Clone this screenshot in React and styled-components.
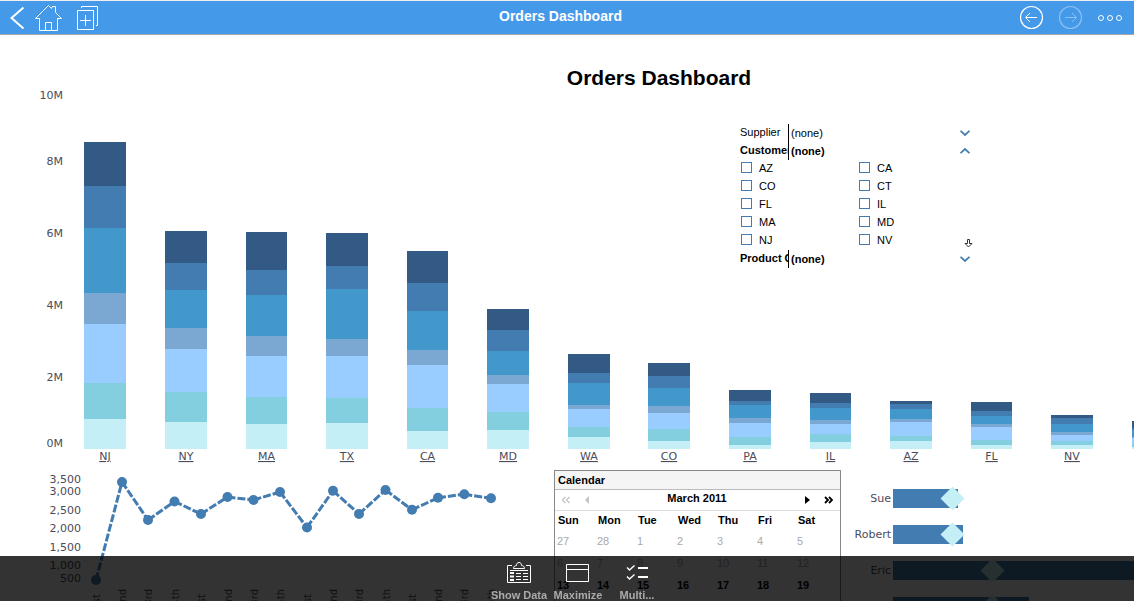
import * as React from "react";
import styled, { createGlobalStyle } from "styled-components";

const SHADES = [
  "#335985",
  "#437cb0",
  "#4298ca",
  "#7ba7d3",
  "#99ccff",
  "#83cfe0",
  "#c4eff6",
];

// segment heights, listed from the top of the stack down
const STATES = [
  { name: "NJ", parts: [44, 42, 65, 31, 59, 36, 30] },
  { name: "NY", parts: [32, 27, 38, 21, 43, 30, 27] },
  { name: "MA", parts: [38, 25, 41, 20, 41, 27, 25] },
  { name: "TX", parts: [33, 23, 50, 17, 42, 25, 26] },
  { name: "CA", parts: [32, 28, 39, 15, 43, 23, 18] },
  { name: "MD", parts: [21, 21, 24, 9, 28, 18, 19] },
  { name: "WA", parts: [19, 10, 22, 4, 18, 10, 12] },
  { name: "CO", parts: [13, 12, 18, 7, 16, 12, 8] },
  { name: "PA", parts: [11, 4, 13, 5, 14, 8, 4] },
  { name: "IL", parts: [10, 5, 12, 4, 10, 8, 7] },
  { name: "AZ", parts: [3, 5, 10, 3, 14, 5, 8] },
  { name: "FL", parts: [9, 5, 8, 3, 13, 5, 4] },
  { name: "NV", parts: [3, 6, 8, 3, 6, 4, 4] },
  { name: "CT", parts: [7, 2, 7, 1, 6, 3, 2] },
];

const STATE_TICKS = [
  ["10M", 64],
  ["8M", 130],
  ["6M", 202],
  ["4M", 274],
  ["2M", 346],
  ["0M", 412],
];

const QUARTER_TICKS = [
  ["3,500", 13],
  ["3,000", 25],
  ["2,500", 44],
  ["2,000", 62],
  ["1,500", 81],
  ["1,000", 99],
  ["500", 112],
];

const QUARTERS = [
  [96, 110],
  [122, 12],
  [148, 50],
  [174.5, 31.5],
  [201, 44],
  [227.5, 27],
  [253.5, 30],
  [280, 22],
  [307, 57.5],
  [333, 20.8],
  [359, 44],
  [385.5, 20],
  [412, 39.8],
  [438, 27.8],
  [464.3, 24.2],
  [491, 28.3],
];

const QUARTER_NAMES = ["1st", "2nd", "3rd", "4th"];

const PEOPLE = [
  { name: "Sue", width: 65, target: 59.5 },
  { name: "Robert", width: 70, target: 59.5 },
  { name: "Eric", width: 300, target: 99.5 },
  { name: "Annie", width: 136, target: 99.5 },
];

const CUSTOMER_STATES = [
  "AZ",
  "CA",
  "CO",
  "CT",
  "FL",
  "IL",
  "MA",
  "MD",
  "NJ",
  "NV",
];

const DAYS = ["Sun", "Mon", "Tue", "Wed", "Thu", "Fri", "Sat"];

const WEEKS = [
  { dim: true, dates: [27, 28, 1, 2, 3, 4, 5] },
  { dim: true, dates: [6, 7, 8, 9, 10, 11, 12] },
  { dim: false, dates: [13, 14, 15, 16, 17, 18, 19] },
  { dim: false, dates: [20, 21, 22, 23, 24, 25, 26] },
];

const StateChart = () => {
  const base = 414;
  return (
    <StateSvg width="1318" height="435" role="img" aria-label="Orders by state">
      {STATE_TICKS.map(([label, y]) => (
        <AxisText key={label} x="63" y={y} textAnchor="end">
          {label}
        </AxisText>
      ))}
      {STATES.map(({ name, parts }, i) => {
        const left = Math.round(84.4 + 80.58 * i);
        const right = Math.round(84.4 + 80.58 * i + 41.7);
        let y = base - parts.reduce((sum, part) => sum + part, 0);
        return (
          <g key={name}>
            {parts.map((part, n) => {
              const top = y;
              y += part;
              return (
                <rect
                  key={n}
                  x={left}
                  y={top}
                  width={right - left}
                  height={part}
                  fill={SHADES[n]}
                />
              );
            })}
            <a href={`#${name}`}>
              <AxisText
                $link
                x={(left + right) / 2}
                y={base + 11}
                textAnchor="middle"
              >
                {name}
              </AxisText>
            </a>
          </g>
        );
      })}
    </StateSvg>
  );
};

const QuarterChart = () => (
  <ChartSvg width="554" height="150" role="img" aria-label="Orders by quarter">
    {QUARTER_TICKS.map(([label, y]) => (
      <AxisText key={label} x="81" y={y} textAnchor="end">
        {label}
      </AxisText>
    ))}
    {QUARTERS.slice(1).map(([x, y], i) => (
      <line
        key={x}
        x1={QUARTERS[i][0]}
        y1={QUARTERS[i][1]}
        x2={x}
        y2={y}
        stroke="#437cb0"
        strokeWidth="3"
        strokeDasharray="8 2"
      />
    ))}
    {QUARTERS.map(([x, y], i) => (
      <g key={x}>
        <circle cx={x} cy={y} r="5" fill="#437cb0" />
        <AxisText
          $small
          textAnchor="end"
          transform={`translate(${Math.round(x) + 4} ${
            i % 4 === 0 ? 124 : 119
          }) rotate(-90)`}
        >
          {QUARTER_NAMES[i % 4]}
        </AxisText>
      </g>
    ))}
  </ChartSvg>
);

const PeopleChart = () => (
  <ChartSvg width="477" height="150" role="img" aria-label="Orders by employee">
    {PEOPLE.map(({ name, width, target }, i) => {
      const y = 19 + i * 36;
      return (
        <g key={name}>
          <AxisText x="50" y={y + 13} textAnchor="end">
            {name}
          </AxisText>
          <rect x="52" y={y} width={width} height="19" fill="#437cb0" />
          <path
            d={`M${52 + target} ${y - 2.5}l12 12l-12 12l-12 -12z`}
            fill="#c4eff6"
          />
        </g>
      );
    })}
  </ChartSvg>
);

const Chevron = ({ up }) => (
  <svg width="10" height="6" fill="none" stroke="#437cb0" strokeWidth="1.8">
    <path d={up ? "M.5 5.2L5 1L9.5 5.2" : "M.5 .8L5 5L9.5 .8"} />
  </svg>
);

const FilterHead = ({ label, bold, open }) => (
  <FilterRow $bold={bold}>
    <FilterLabel>{label}</FilterLabel>
    <FilterValue type="button" aria-expanded={!!open} aria-label={label}>
      (none)
      <Chevron up={open} />
    </FilterValue>
  </FilterRow>
);

const Filters = () => (
  <FilterPanel>
    <FilterHead label="Supplier" />
    <FilterHead label="Customer State" bold open />
    <FilterOptions>
      <OptionGrid>
        {CUSTOMER_STATES.map((name) => (
          <Option key={name}>
            <Tick type="checkbox" />
            {name}
          </Option>
        ))}
      </OptionGrid>
      <MoreButton type="button" aria-label="More states">
        <svg width="9" height="10" fill="#fff" stroke="#333">
          <path d="M3.5 1.5h2v4h2.5l-3.5 3.5l-3.5 -3.5h2.5z" />
        </svg>
      </MoreButton>
    </FilterOptions>
    <FilterHead label="Product Category" bold />
  </FilterPanel>
);

const Calendar = () => (
  <CalendarBox>
    <CalendarTitle>Calendar</CalendarTitle>
    <MonthBar>
      <MonthButton type="button" aria-label="Previous year" $dim>
        <svg
          width="9"
          height="8"
          fill="none"
          stroke="currentColor"
          strokeWidth="1.4"
        >
          <path d="M4.5 1L1.5 4L4.5 7M8.5 1L5.5 4L8.5 7" />
        </svg>
      </MonthButton>
      <MonthButton type="button" aria-label="Previous month" $dim>
        <svg width="5" height="8" fill="currentColor">
          <path d="M5 0V8L1 4z" />
        </svg>
      </MonthButton>
      <Month>March 2011</Month>
      <MonthButton type="button" aria-label="Next month">
        <svg width="5" height="8" fill="currentColor">
          <path d="M0 0V8L5 4z" />
        </svg>
      </MonthButton>
      <MonthButton type="button" aria-label="Next year">
        <svg
          width="9"
          height="8"
          fill="none"
          stroke="currentColor"
          strokeWidth="1.8"
        >
          <path d="M1 1L4 4L1 7M5 1L8 4L5 7" />
        </svg>
      </MonthButton>
    </MonthBar>
    <DayTable>
      <thead>
        <tr>
          {DAYS.map((day) => (
            <th key={day} scope="col">
              {day}
            </th>
          ))}
        </tr>
      </thead>
      <tbody>
        {WEEKS.map(({ dim, dates }) => (
          <Week key={dates[0]} $dim={dim}>
            {dates.map((date) => (
              <td key={date}>{date}</td>
            ))}
          </Week>
        ))}
      </tbody>
    </DayTable>
  </CalendarBox>
);

const TopBar = () => (
  <Header>
    <HeaderGroup $gap={10}>
      <IconButton type="button" aria-label="Back">
        <svg width="15" height="29" fill="none" stroke="#fff" strokeWidth="2">
          <path d="M13.5 4.5L1.5 15L13.5 25.5" />
        </svg>
      </IconButton>
      <IconButton type="button" aria-label="Home">
        <svg width="32" height="29" fill="none" stroke="#fff">
          <path d="M.5 15.5L13.5 2.5L16.5 5.5L17.5 3.5H20.5V9.5L26.5 15.5H22.5V27.5H4.5V15.5zM10.5 27.5V19.5H16.5V27.5" />
        </svg>
      </IconButton>
      <IconButton type="button" aria-label="Add to dashboard">
        <svg width="22" height="29" fill="none" stroke="#fff">
          <path d="M.5 7.5H16.5V26.5H.5zM3 17.5H14M8.5 12V23M4.5 5V3.5H20.5V22.5H19" />
        </svg>
      </IconButton>
    </HeaderGroup>
    <HeaderTitle>Orders Dashboard</HeaderTitle>
    <HeaderGroup $gap={14}>
      <IconButton type="button" aria-label="Undo">
        <svg width="25" height="29" fill="none" stroke="#fff">
          <circle cx="12.5" cy="14.5" r="11" strokeWidth="1.2" />
          <path d="M18 14.5H7M11 10L6.5 14.5L11 19" />
        </svg>
      </IconButton>
      <IconButton type="button" aria-label="Redo" disabled>
        <svg width="25" height="29" fill="none" stroke="#8cc0f1">
          <circle cx="12.5" cy="14.5" r="11" strokeWidth="1.2" />
          <path d="M7 14.5H18M14 10L18.5 14.5L14 19" />
        </svg>
      </IconButton>
      <IconButton type="button" aria-label="More">
        <svg width="26" height="29" fill="none" stroke="#fff">
          <circle cx="4" cy="15" r="2.5" />
          <circle cx="13" cy="15" r="2.5" />
          <circle cx="22" cy="15" r="2.5" />
        </svg>
      </IconButton>
    </HeaderGroup>
  </Header>
);

const ActionBar = () => (
  <Actions>
    <Action type="button">
      <svg width="24" height="24" fill="none" stroke="#fff">
        <path d="M5 4.5H.5V21.5H23.5V4.5H19M3 9.5H21" />
        <path d="M6.5 7.5C6.5 5.5 8 4.5 9.5 4.5C9.5 2.5 10.5 1.5 12 1.5C13.5 1.5 14.5 2.5 14.5 4.5C16 4.5 17.5 5.5 17.5 7.5z" />
        <path d="M3 12H7M3 15.5H7M3 19H7" strokeWidth="2" />
        <path d="M9 12.5H14M16 12.5H21M9 15.5H14M16 15.5H21M9 18.5H14M16 18.5H21" />
      </svg>
      Show Data
    </Action>
    <Action type="button">
      <svg width="24" height="24" fill="none" stroke="#fff">
        <path d="M.5 3.5H22.5V20.5H.5zM.5 8.5H22.5" />
      </svg>
      Maximize
    </Action>
    <Action type="button">
      <svg width="24" height="24" fill="none" stroke="#fff">
        <path
          d="M2 6.5L4.5 9L9.5 4.5M2 15.5L4.5 18L9.5 13.5"
          strokeWidth="1.4"
        />
        <path d="M13 7H23M13 16H23" strokeWidth="2" />
      </svg>
      Multi...
    </Action>
  </Actions>
);

const App = () => {
  return (
    <Page>
      <GlobalStyle />
      <TopBar />
      <Viewport>
        <Board>
          <Overview>
            <StateChart />
            <BoardTitle>Orders Dashboard</BoardTitle>
            <Filters />
          </Overview>
          <Details>
            <QuarterChart />
            <Calendar />
            <PeopleChart />
          </Details>
        </Board>
      </Viewport>
      <ActionBar />
    </Page>
  );
};

const GlobalStyle = createGlobalStyle`
  body {
    margin: 0;
    background: white;
    font-family: "Liberation Sans", Arial, sans-serif;
    font-size: 11px;
    color: black;
  }

  button {
    padding: 0;
    border: 0;
    background: none;
    font: inherit;
    color: inherit;
  }

  svg {
    display: block;
    flex: none;
  }
`;

const Page = styled.div`
  display: flex;
  flex-direction: column;
  height: 100vh;
`;

const Header = styled.header`
  box-sizing: border-box;
  flex: none;
  display: flex;
  height: 35px;
  padding: 0 11px 0 10px;
  background: #4599e9;
  border-top: 1px solid #f0f0f0;
  border-bottom: 1px solid #a5a8ab;
`;

const HeaderGroup = styled.div`
  display: flex;
  align-items: center;
  gap: ${(props) => props.$gap}px;
`;

const HeaderTitle = styled.div`
  flex: 1;
  padding-left: 3px;
  text-align: center;
  font-size: 14px;
  font-weight: bold;
  line-height: 30px;
  color: white;
`;

const IconButton = styled.button`
  display: block;
`;

const Viewport = styled.main`
  flex: 1;
  min-height: 0;
  overflow: hidden;
`;

const Board = styled.div`
  min-width: 1318px;
`;

const Overview = styled.section`
  display: grid;
  grid-template-columns: 740px 236px 1fr;
  grid-template-rows: 89px auto;
`;

const StateSvg = styled.svg`
  grid-area: 1 / 1 / 3 / 4;
`;

const ChartSvg = styled.svg`
  overflow: hidden;
`;

const AxisText = styled.text`
  font-family: "DejaVu Sans", sans-serif;
  font-size: ${(props) => (props.$small ? 10 : 11)}px;
  fill: #4b4b5a;
  text-decoration: ${(props) => (props.$link ? "underline" : "none")};
`;

const BoardTitle = styled.h1`
  grid-area: 1 / 1 / 2 / 4;
  margin: 0;
  text-align: center;
  font-size: 21px;
  line-height: 86px;
`;

const FilterPanel = styled.div`
  grid-area: 2 / 2;
  align-self: start;
`;

const FilterRow = styled.div`
  display: flex;
  height: 18px;
  font-weight: ${(props) => (props.$bold ? "bold" : "normal")};
`;

const FilterLabel = styled.div`
  width: 48px;
  overflow: hidden;
  white-space: nowrap;
  line-height: 17px;
`;

const FilterValue = styled.button`
  flex: 1;
  display: flex;
  align-items: center;
  justify-content: space-between;
  padding: 0 6px 0 2px;
  border-left: 1px solid black;
`;

const FilterOptions = styled.div`
  display: flex;
  align-items: flex-end;
`;

const OptionGrid = styled.div`
  flex: 1;
  display: grid;
  grid-template-columns: 118px 1fr;
`;

const Option = styled.label`
  display: flex;
  align-items: center;
  gap: 7px;
  height: 15px;
  padding: 0 0 3px 1px;
`;

const Tick = styled.input`
  appearance: none;
  box-sizing: border-box;
  width: 11px;
  height: 11px;
  margin: 0;
  border: 1px solid #437cb0;
  background: white;
`;

const MoreButton = styled.button`
  padding: 0 3px 2px 0;
`;

const Details = styled.section`
  display: grid;
  grid-template-columns: 554px 287px 1fr;
`;

const CalendarBox = styled.div`
  border: 1px solid #888;
  background: white;
`;

const CalendarTitle = styled.div`
  padding-left: 3px;
  background: #f5f5f5;
  border-bottom: 1px solid #bbb;
  font-weight: bold;
  line-height: 18px;
`;

const MonthBar = styled.div`
  display: flex;
  align-items: center;
  gap: 14px;
  height: 20px;
  padding: 0 7px 0 6px;
  border-bottom: 1px solid #ddd;
`;

const Month = styled.div`
  flex: 1;
  padding-bottom: 4px;
  text-align: center;
  font-weight: bold;
`;

const MonthButton = styled.button`
  color: ${(props) => (props.$dim ? "#c4c4c4" : "black")};
`;

const DayTable = styled.table`
  width: 280px;
  margin-left: 2px;
  table-layout: fixed;
  border-collapse: collapse;
  font-weight: bold;

  th,
  td {
    height: 22px;
    padding: 0;
    text-align: left;
  }

  th {
    box-sizing: border-box;
    height: 19px;
    padding: 0 0 2px 1px;
  }
`;

const Week = styled.tr`
  color: ${(props) => (props.$dim ? "#aaa" : "black")};
  font-weight: ${(props) => (props.$dim ? "normal" : "bold")};
`;

const Actions = styled.footer`
  position: fixed;
  left: 0;
  right: 0;
  bottom: 0;
  box-sizing: border-box;
  display: flex;
  justify-content: center;
  height: 45px;
  padding: 5px 0 0 22px;
  background: rgba(0, 0, 0, 0.8);
`;

const Action = styled.button`
  display: flex;
  flex-direction: column;
  align-items: center;
  gap: 3px;
  width: 59px;
  font-weight: bold;
  line-height: 14px;
  white-space: nowrap;
  color: #aaa;
`;

export default App;
